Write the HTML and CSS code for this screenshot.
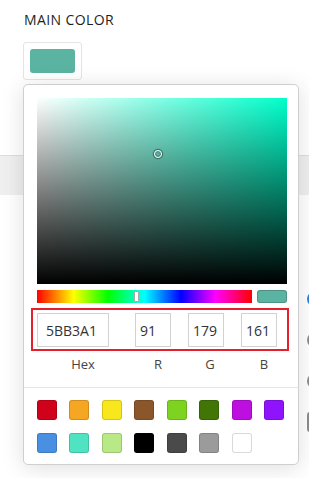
FILE: index.html
```html
<!DOCTYPE html>
<html lang="en">
<head>
  <meta charset="UTF-8" />
  <meta name="viewport" content="width=device-width, initial-scale=1.0" />
  <title>Main color</title>
  <link rel="stylesheet" href="styles.css">
</head>
<body>
  <div class="panel">
    <div class="field">
      <div class="field-label">MAIN COLOR</div>
      <button class="swatch-btn" type="button"><span class="swatch-fill"></span></button>
    </div>

    <div class="band"></div>

    <div class="rows">
      <div class="row"><span class="ctl ctl-on"></span></div>
      <div class="row"><span class="ctl"></span></div>
      <div class="row"><span class="ctl"></span></div>
      <div class="row"><span class="ctl ctl-box"></span></div>
    </div>

    <div class="picker">
      <div class="sat">
        <span class="sat-pointer"></span>
      </div>

      <div class="hue-row">
        <div class="hue">
          <span class="hue-handle"></span>
        </div>
        <div class="preview"></div>
      </div>

      <div class="fields">
        <input class="inp inp-hex" type="text" value="5BB3A1">
        <input class="inp" type="text" value="91">
        <input class="inp" type="text" value="179">
        <input class="inp" type="text" value="161">
      </div>
      <div class="labels">
        <span>Hex</span>
        <span>R</span>
        <span>G</span>
        <span>B</span>
      </div>

      <div class="divider"></div>

      <div class="presets">
        <span class="preset" style="background:#d0021b"></span>
        <span class="preset" style="background:#f5a623"></span>
        <span class="preset" style="background:#f8e71c"></span>
        <span class="preset" style="background:#8b572a"></span>
        <span class="preset" style="background:#7ed321"></span>
        <span class="preset" style="background:#417505"></span>
        <span class="preset" style="background:#bd10e0"></span>
        <span class="preset" style="background:#9013fe"></span>
        <span class="preset" style="background:#4a90e2"></span>
        <span class="preset" style="background:#50e3c2"></span>
        <span class="preset" style="background:#b8e986"></span>
        <span class="preset" style="background:#000000"></span>
        <span class="preset" style="background:#4a4a4a"></span>
        <span class="preset" style="background:#9b9b9b"></span>
        <span class="preset" style="background:#ffffff"></span>
      </div>
    </div>
  </div>
</body>
</html>
```

FILE: styles.css
```css
body {
  margin: 0;
  padding: 0;
  background: #fff;
  font-family: 'Open Sans', 'Liberation Sans', sans-serif;
  color: #222;
}
.panel {
  position: relative;
  width: 309px;
  height: 478px;
  overflow: hidden;
  background: #fff;
}
.field {
  padding: 10px 0 0 24px;
}
.field-label {
  font-size: 14px;
  line-height: 19px;
  letter-spacing: 0.4px;
  color: #1f1f1f;
}
.swatch-btn {
  display: block;
  margin: 13px 0 0 -1px;
  padding: 6px;
  width: 59px;
  height: 38px;
  box-sizing: border-box;
  background: #fff;
  border: 1px solid #e4e4e4;
  border-radius: 3px;
}
.swatch-fill {
  display: block;
  width: 45px;
  height: 24px;
  border-radius: 3px;
  background: #5bb3a1;
}
.band {
  margin-top: 75px;
  height: 39px;
  background: #efefef;
  border-top: 1px solid #dedede;
}
.rows {
  margin-top: 83px;
}
.row {
  height: 41px;
  display: flex;
  align-items: center;
  justify-content: flex-end;
}
.ctl {
  width: 16px;
  height: 16px;
  margin-right: -14px;
  border-radius: 50%;
  background: #8c8c8c;
}
.ctl-on {
  background: #2f7fe0;
}
.ctl-box {
  height: 20px;
  border-radius: 3px;
}

/* picker popup */
.picker {
  position: absolute;
  top: 84px;
  left: 23px;
  width: 276px;
  box-sizing: border-box;
  padding: 13px 11px 11px 13px;
  background: #fff;
  border: 1px solid #cfcfcf;
  border-radius: 5px;
  box-shadow: 0 3px 22px rgba(0, 0, 0, 0.13);
}
.sat {
  position: relative;
  height: 186px;
  background:
    linear-gradient(to top, #000, rgba(0, 0, 0, 0)),
    linear-gradient(to right, #fff, rgba(255, 255, 255, 0)),
    rgb(0, 255, 203);
}
.sat-pointer {
  position: absolute;
  left: 121px;
  top: 56px;
  width: 6px;
  height: 6px;
  margin: -4.5px 0 0 -4.5px;
  border: 1.5px solid #fff;
  border-radius: 50%;
  box-shadow: 0 0 1px 1px rgba(0, 0, 0, 0.45), inset 0 0 1px 1px rgba(0, 0, 0, 0.3);
}
.hue-row {
  display: flex;
  gap: 5px;
  margin-top: 6px;
  height: 13px;
}
.hue {
  position: relative;
  width: 215px;
  background: linear-gradient(to right, #f00 0%, #ff0 17%, #0f0 33%, #0ff 50%, #00f 67%, #f0f 83%, #f00 100%);
}
.hue-handle {
  position: absolute;
  left: 97px;
  top: 1px;
  width: 3px;
  height: 9px;
  background: #fff;
  border: 1px solid #aaa;
  border-radius: 1px;
}
.preview {
  width: 30px;
  border-radius: 3px;
  background: #5bb3a1;
  box-shadow: inset 0 0 0 1px rgba(0, 0, 0, 0.18);
}
.fields {
  display: flex;
  gap: 17px;
  margin: 5px -2px 0 -6px;
  padding: 3px 10px 2px 4px;
  border: 2px solid #e3202b;
}
.inp {
  width: 36px;
  height: 34px;
  box-sizing: border-box;
  margin: 0;
  padding: 0 0 0 4px;
  border: 1px solid #d2d2d2;
  font-family: 'Open Sans', 'Liberation Sans', sans-serif;
  font-size: 14px;
  color: #333;
  background: #fff;
}
.inp-hex {
  width: 72px;
  margin-right: 9px;
  padding-left: 8px;
}
.labels {
  display: grid;
  grid-template-columns: 92px 58px 46px 62px;
  margin-top: 4px;
  font-size: 13px;
  line-height: 18px;
  color: #444;
  text-align: center;
}
.divider {
  margin: 14px -11px 0 -13px;
  height: 1px;
  background: #e6e6e6;
}
.presets {
  display: grid;
  grid-template-columns: repeat(8, 20px);
  justify-content: space-between;
  row-gap: 13px;
  width: 247px;
  padding-top: 12px;
}
.preset {
  height: 20px;
  border-radius: 3px;
  box-shadow: inset 0 0 0 1px rgba(0, 0, 0, 0.15);
}
```
